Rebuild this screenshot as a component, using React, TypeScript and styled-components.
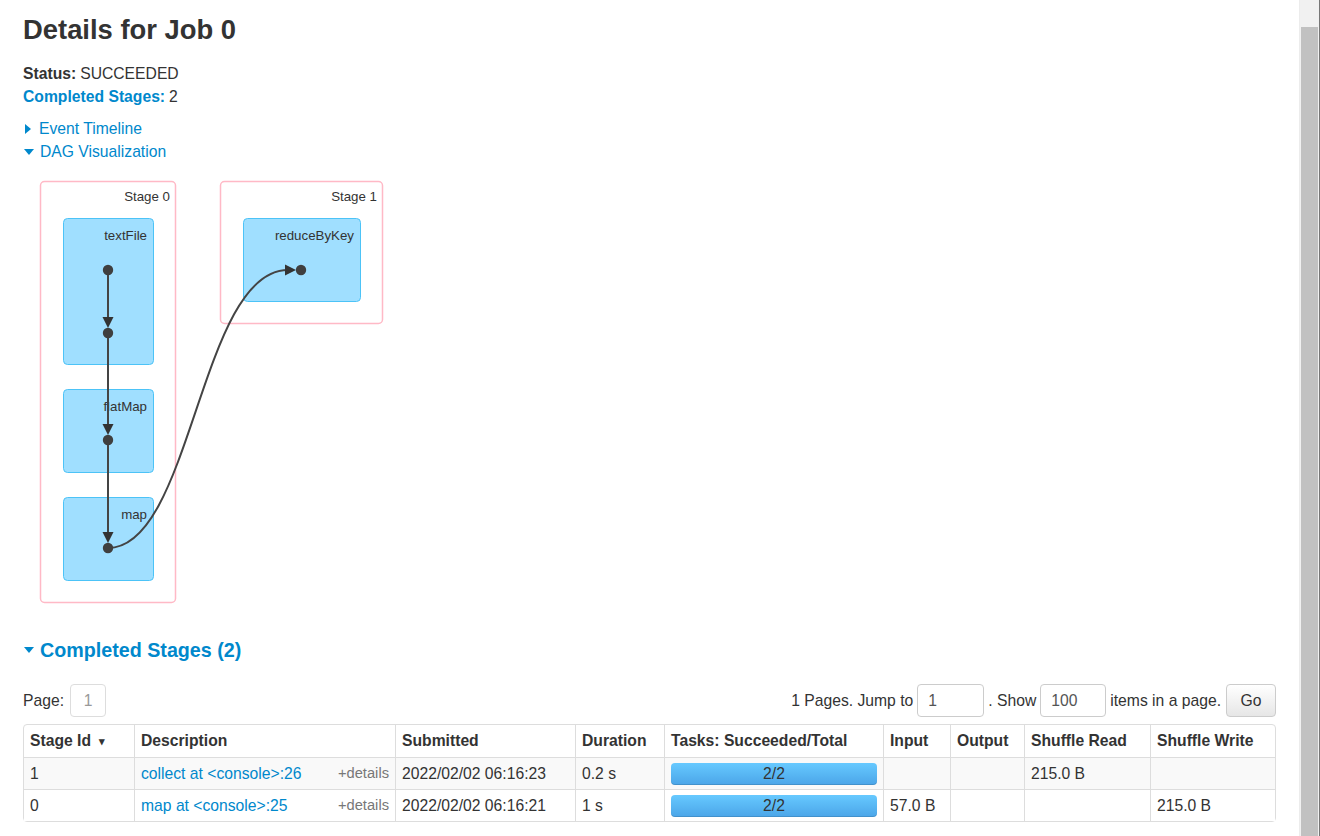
import React, { FC } from 'react';
import styled, { createGlobalStyle } from 'styled-components';

const GlobalStyle = createGlobalStyle`
  html, body {
    margin: 0;
    padding: 0;
    background: #fff;
    overflow: hidden;
  }
  body {
    font-family: "Liberation Sans", Arial, sans-serif;
    font-size: 15.7px;
    color: #333;
  }
`;

const ShellSC = styled.div`
  display: flex;
  height: 836px;
`;

const MainSC = styled.main`
  flex: 1;
  min-width: 0;
  padding: 0 23px;
`;

const ScrollbarSC = styled.aside`
  width: 19px;
  border-left: 1px solid #ececec;
  border-right: 1px solid #777;
  background: #f1f1f1;
  display: flex;
  flex-direction: column;
  padding-top: 27px;
  box-sizing: content-box;
`;

const ThumbSC = styled.div`
  flex: 1;
  margin: 0 1px 0 1px;
  background: #c1c1c1;
`;

const TitleSC = styled.h3`
  margin: 13px 0 0;
  font-size: 27.4px;
  line-height: 33px;
  font-weight: bold;
  color: #333;
`;

const ListSC = styled.ul<{ $top: number }>`
  list-style: none;
  margin: ${(p) => p.$top}px 0 0;
  padding: 0;
  line-height: 23px;

  & > li {
    height: 23px;
    display: flex;
    align-items: center;
  }
`;

const LabelSC = styled.strong<{ $link?: boolean }>`
  color: ${(p) => (p.$link ? '#0088cc' : '#333')};
  margin-right: 4px;
`;

const LinkSC = styled.a`
  color: #0088cc;
  text-decoration: none;
  cursor: pointer;
`;

const ToggleSC = styled(LinkSC)`
  display: inline-flex;
  align-items: center;
  height: 23px;
`;

const ArrowSC = styled.span<{ $open?: boolean; $size?: number }>`
  display: inline-block;
  width: 0;
  height: 0;
  margin-right: ${(p) => (p.$open ? 6 : 8)}px;
  margin-left: ${(p) => (p.$open ? 1 : 2)}px;
  ${(p) =>
    p.$open
      ? `border-left: ${p.$size ?? 5}px solid transparent;
         border-right: ${p.$size ?? 5}px solid transparent;
         border-top: ${(p.$size ?? 5) + 1}px solid #0088cc;`
      : `border-top: 5px solid transparent;
         border-bottom: 5px solid transparent;
         border-left: 6px solid #0088cc;`}
`;

const DagSC = styled.svg`
  display: block;
  margin-top: 7px;
  font-family: "Liberation Sans", Arial, sans-serif;
`;

const SectionTitleSC = styled.h4`
  margin: 23px 0 0;
  font-size: 19.7px;
  line-height: 24px;
  font-weight: bold;
  display: flex;
  align-items: center;
  color: #0088cc;
`;

const PagerSC = styled.div`
  margin-top: 22px;
  display: flex;
  align-items: center;
  height: 33px;
  color: #333;
`;

const PageBoxSC = styled.span`
  margin-left: 6px;
  width: 34px;
  height: 31px;
  border: 1px solid #ddd;
  border-radius: 4px;
  display: inline-flex;
  align-items: center;
  justify-content: center;
  color: #999;
`;

const SpacerSC = styled.div`
  flex: 1;
`;

const InputSC = styled.input<{ $w: number }>`
  width: ${(p) => p.$w}px;
  height: 33px;
  box-sizing: border-box;
  margin: 0 4px;
  padding: 0 10px;
  border: 1px solid #ccc;
  border-radius: 4px;
  font: inherit;
  color: #555;
  outline: none;
`;

const GoSC = styled.button`
  margin-left: 5px;
  width: 50px;
  height: 33px;
  border: 1px solid #ccc;
  border-radius: 4px;
  background: linear-gradient(to bottom, #ffffff, #e6e6e6);
  font: inherit;
  color: #333;
  padding: 0;
`;

const TableSC = styled.table`
  margin-top: 7px;
  width: 100%;
  table-layout: fixed;
  border-collapse: separate;
  border-spacing: 0;
  border: 1px solid #ddd;
  border-radius: 4px;
`;

const ThSC = styled.th`
  height: 32px;
  padding: 0 6px;
  text-align: left;
  font-weight: bold;
  white-space: nowrap;
  & + & {
    border-left: 1px solid #ddd;
  }
`;

const RowSC = styled.tr<{ $striped?: boolean }>`
  background: ${(p) => (p.$striped ? '#f9f9f9' : '#fff')};
`;

const TdSC = styled.td`
  height: 31px;
  padding: 0 6px;
  border-top: 1px solid #ddd;
  white-space: nowrap;
  & + & {
    border-left: 1px solid #ddd;
  }
`;

const DetailsSC = styled.span`
  float: right;
  color: #777;
  font-size: 14.7px;
`;

const SortSC = styled.span`
  margin-left: 8px;
  font-size: 11px;
  position: relative;
  top: -1px;
`;

const ProgressSC = styled.div`
  height: 22px;
  border-radius: 4px;
  background: linear-gradient(to bottom, #66c9ff, #4ba5e8);
  box-shadow: inset 0 -1px 0 rgba(0, 0, 0, 0.12);
  display: flex;
  align-items: center;
  justify-content: center;
  color: #333;
`;

type Stage = {
  id: number;
  desc: string;
  submitted: string;
  duration: string;
  tasks: string;
  input: string;
  output: string;
  shuffleRead: string;
  shuffleWrite: string;
};

const stages: Stage[] = [
  {
    id: 1,
    desc: 'collect at <console>:26',
    submitted: '2022/02/02 06:16:23',
    duration: '0.2 s',
    tasks: '2/2',
    input: '',
    output: '',
    shuffleRead: '215.0 B',
    shuffleWrite: '',
  },
  {
    id: 0,
    desc: 'map at <console>:25',
    submitted: '2022/02/02 06:16:21',
    duration: '1 s',
    tasks: '2/2',
    input: '57.0 B',
    output: '',
    shuffleRead: '',
    shuffleWrite: '215.0 B',
  },
];

const columns = [
  { label: 'Stage Id', width: 110 },
  { label: 'Description', width: 261 },
  { label: 'Submitted', width: 180 },
  { label: 'Duration', width: 89 },
  { label: 'Tasks: Succeeded/Total', width: 219 },
  { label: 'Input', width: 67 },
  { label: 'Output', width: 74 },
  { label: 'Shuffle Read', width: 126 },
  { label: 'Shuffle Write', width: undefined },
];

const rdds = [
  { name: 'textFile', x: 63.5, y: 218.5, w: 90, h: 146 },
  { name: 'flatMap', x: 63.5, y: 389.5, w: 90, h: 83 },
  { name: 'map', x: 63.5, y: 497.5, w: 90, h: 83 },
  { name: 'reduceByKey', x: 243.5, y: 218.5, w: 117, h: 83 },
];

const clusters = [
  { name: 'Stage 0', x: 40.5, y: 181.5, w: 135, h: 421 },
  { name: 'Stage 1', x: 220.5, y: 181.5, w: 162, h: 142 },
];

const dots = [
  [108, 270],
  [108, 333],
  [108, 440],
  [108, 548],
  [301, 270],
];

const DagViz: FC = () => (
  <DagSC width={400} height={445} viewBox="23 170 400 445">
    {clusters.map((c) => (
      <g key={c.name}>
        <rect x={c.x} y={c.y} width={c.w} height={c.h} rx={4} fill="#fff" stroke="#ffb9c6" strokeWidth={1.5} />
        <text x={c.x + c.w - 5.5} y={c.y + 19.5} textAnchor="end" fontSize={13.3} fill="#333">
          {c.name}
        </text>
      </g>
    ))}
    {rdds.map((r) => (
      <g key={r.name}>
        <rect x={r.x} y={r.y} width={r.w} height={r.h} rx={4} fill="#a0dfff" stroke="#4cc3f7" strokeWidth={1} />
        <text x={r.x + r.w - 6.5} y={r.y + 21.5} textAnchor="end" fontSize={13.3} fill="#333">
          {r.name}
        </text>
      </g>
    ))}
    <g stroke="#444" strokeWidth={2} fill="none">
      <line x1={108} y1={270} x2={108} y2={320} />
      <line x1={108} y1={333} x2={108} y2={427} />
      <line x1={108} y1={440} x2={108} y2={535} />
      <path d="M108,548 C192,548 200,270 288,270" />
    </g>
    <g fill="#333">
      <polygon points="102.5,317 113.5,317 108,328" />
      <polygon points="102.5,424 113.5,424 108,435" />
      <polygon points="102.5,532 113.5,532 108,543" />
      <polygon points="285,264.5 285,275.5 296,270" />
      {dots.map(([cx, cy]) => (
        <circle key={`${cx}-${cy}`} cx={cx} cy={cy} r={5.2} fill="#3f3f3f" />
      ))}
    </g>
  </DagSC>
);

const App: FC = () => (
  <ShellSC>
    <GlobalStyle />
    <MainSC>
      <TitleSC>Details for Job 0</TitleSC>
      <ListSC $top={16}>
        <li>
          <LabelSC>Status:</LabelSC>SUCCEEDED
        </li>
        <li>
          <LinkSC>
            <LabelSC $link>Completed Stages:</LabelSC>
          </LinkSC>
          2
        </li>
      </ListSC>
      <ListSC $top={9}>
        <li>
          <ToggleSC>
            <ArrowSC />
            Event Timeline
          </ToggleSC>
        </li>
        <li>
          <ToggleSC>
            <ArrowSC $open />
            DAG Visualization
          </ToggleSC>
        </li>
      </ListSC>
      <DagViz />
      <SectionTitleSC>
        <ArrowSC $open />
        Completed Stages (2)
      </SectionTitleSC>
      <PagerSC>
        <span>Page:</span>
        <PageBoxSC>1</PageBoxSC>
        <SpacerSC />
        <span>1 Pages. Jump to</span>
        <InputSC $w={67} defaultValue="1" />
        <span>. Show</span>
        <InputSC $w={66} defaultValue="100" />
        <span>items in a page.</span>
        <GoSC>Go</GoSC>
      </PagerSC>
      <TableSC>
        <colgroup>
          {columns.map((c) => (
            <col key={c.label} style={c.width ? { width: c.width } : undefined} />
          ))}
        </colgroup>
        <thead>
          <tr>
            {columns.map((c, i) => (
              <ThSC key={c.label}>
                {c.label}
                {i === 0 && <SortSC>▾</SortSC>}
              </ThSC>
            ))}
          </tr>
        </thead>
        <tbody>
          {stages.map((s, i) => (
            <RowSC key={s.id} $striped={i % 2 === 0}>
              <TdSC>{s.id}</TdSC>
              <TdSC>
                <LinkSC>{s.desc}</LinkSC>
                <DetailsSC>+details</DetailsSC>
              </TdSC>
              <TdSC>{s.submitted}</TdSC>
              <TdSC>{s.duration}</TdSC>
              <TdSC>
                <ProgressSC>{s.tasks}</ProgressSC>
              </TdSC>
              <TdSC>{s.input}</TdSC>
              <TdSC>{s.output}</TdSC>
              <TdSC>{s.shuffleRead}</TdSC>
              <TdSC>{s.shuffleWrite}</TdSC>
            </RowSC>
          ))}
        </tbody>
      </TableSC>
    </MainSC>
    <ScrollbarSC>
      <ThumbSC />
    </ScrollbarSC>
  </ShellSC>
);

export default App;
